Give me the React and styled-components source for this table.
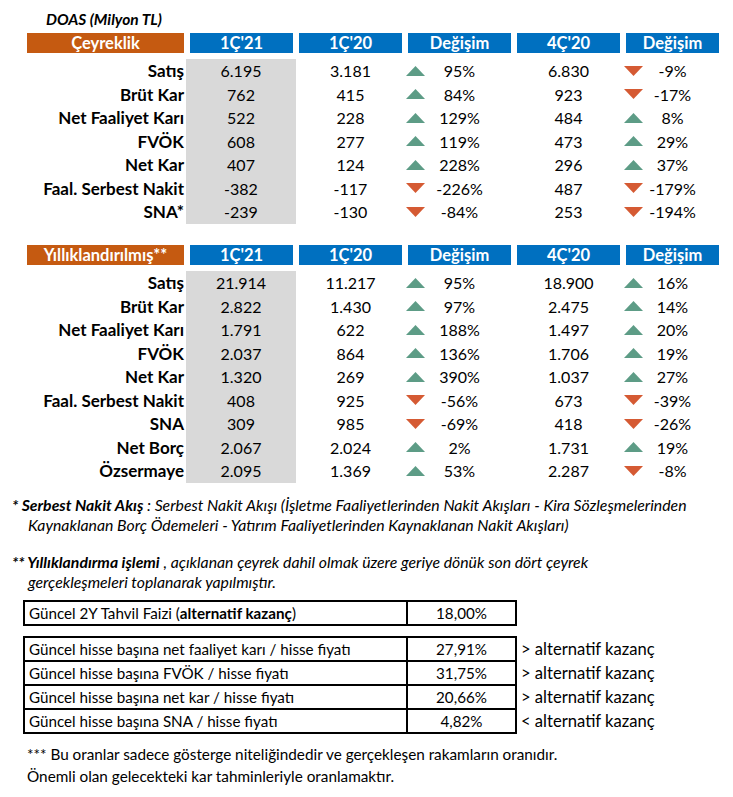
import React from 'react'
import styled, { createGlobalStyle } from 'styled-components'

const Global = createGlobalStyle`
    body {
        margin: 0;
        background: #fff;
        font-family: Lato, "Open Sans", sans-serif;
        color: #000;
    }
`

const Page = styled.div`
    width: 733px;
    padding-top: 9px;
`
const Title = styled.div`
    height: 24px;
    line-height: 20px;
    padding-left: 46px;
    font-size: 15.5px;
    font-weight: 700;
    font-style: italic;
`
const Grid = styled.div`
    display: grid;
    grid-template-columns: 157px 103px 103px 103px 103px 93px;
    column-gap: 6px;
    margin-left: 27px;
    margin-bottom: ${p => p.$gap || 0}px;
`
const Head = styled.div`
    height: 20px;
    line-height: 20px;
    margin-bottom: 6px;
    background: ${p => (p.$orange ? '#c55a11' : '#0070c0')};
    color: #fff;
    font-size: 16.5px;
    font-weight: 700;
    text-align: center;
    white-space: nowrap;
`
const Label = styled.div`
    height: 23.5px;
    line-height: 23.5px;
    text-align: right;
    font-size: 17px;
    font-weight: 700;
    white-space: nowrap;
`
const Value = styled.div`
    height: 23.5px;
    line-height: 23.5px;
    text-align: center;
    font-size: 16px;
    ${p => p.$grey && 'background: #d9d9d9; margin: 0 -3px 0 -4px;'}
`
const Change = styled.div`
    display: grid;
    grid-template-columns: 22px 1fr 22px;
    align-items: center;
    height: 23.5px;
    font-size: 16px;
    text-align: center;
    svg {
        margin-left: -2px;
    }
`
const Notes = styled.div`
    padding-left: 12px;
    font-size: 15.8px;
    font-style: italic;
    line-height: 20px;
    margin-bottom: ${p => p.$gap || 0}px;
    b {
        font-weight: 700;
    }
    div + div {
        padding-left: 16px;
    }
`
const RatioTable = styled.table`
    border-collapse: collapse;
    margin-left: 23px;
    margin-bottom: ${p => p.$gap || 0}px;
    font-size: 15.2px;
    td {
        height: 21px;
        padding: 1px 4px 0;
        line-height: 21px;
        white-space: nowrap;
    }
`
const NameCell = styled.td`
    width: 373px;
    border: 2px solid #000;
`
const RateCell = styled.td`
    width: 99px;
    border: 2px solid #000;
    text-align: center;
`
const SideCell = styled.td`
    font-size: 16.6px;
`
const Footer = styled.div`
    padding-left: 27px;
    font-size: 15.3px;
    line-height: 22px;
    margin-top: 9px;
`

const Tri = ({ up }) => (
    <svg width="19" height="10" viewBox="0 0 19 10">
        {up ? (
            <polygon points="9.5,0 19,10 0,10" fill="#5d9c86" />
        ) : (
            <polygon points="0,0 19,0 9.5,10" fill="#d55a33" />
        )}
    </svg>
)

const quarterly = [
    ['Satış', '6.195', '3.181', '95%', '6.830', '-9%'],
    ['Brüt Kar', '762', '415', '84%', '923', '-17%'],
    ['Net Faaliyet Karı', '522', '228', '129%', '484', '8%'],
    ['FVÖK', '608', '277', '119%', '473', '29%'],
    ['Net Kar', '407', '124', '228%', '296', '37%'],
    ['Faal. Serbest Nakit', '-382', '-117', '-226%', '487', '-179%'],
    ['SNA*', '-239', '-130', '-84%', '253', '-194%'],
]

const yearly = [
    ['Satış', '21.914', '11.217', '95%', '18.900', '16%'],
    ['Brüt Kar', '2.822', '1.430', '97%', '2.475', '14%'],
    ['Net Faaliyet Karı', '1.791', '622', '188%', '1.497', '20%'],
    ['FVÖK', '2.037', '864', '136%', '1.706', '19%'],
    ['Net Kar', '1.320', '269', '390%', '1.037', '27%'],
    ['Faal. Serbest Nakit', '408', '925', '-56%', '673', '-39%'],
    ['SNA', '309', '985', '-69%', '418', '-26%'],
    ['Net Borç', '2.067', '2.024', '2%', '1.731', '19%'],
    ['Özsermaye', '2.095', '1.369', '53%', '2.287', '-8%'],
]

const ratios = [
    ['Güncel hisse başına net faaliyet karı / hisse fiyatı', '27,91%', '> alternatif kazanç'],
    ['Güncel hisse başına FVÖK / hisse fiyatı', '31,75%', '> alternatif kazanç'],
    ['Güncel hisse başına net kar / hisse fiyatı', '20,66%', '> alternatif kazanç'],
    ['Güncel hisse başına SNA / hisse fiyatı', '4,82%', '< alternatif kazanç'],
]

const ChangeCell = ({ v }) => (
    <Change>
        <Tri up={!v.startsWith('-')} />
        <span>{v}</span>
        <span />
    </Change>
)

const DataTable = ({ title, rows, gap }) => (
    <Grid $gap={gap}>
        <Head $orange>{title}</Head>
        <Head>1Ç'21</Head>
        <Head>1Ç'20</Head>
        <Head>Değişim</Head>
        <Head>4Ç'20</Head>
        <Head>Değişim</Head>
        {rows.map(r => (
            <React.Fragment key={r[0]}>
                <Label>{r[0]}</Label>
                <Value $grey>{r[1]}</Value>
                <Value>{r[2]}</Value>
                <ChangeCell v={r[3]} />
                <Value>{r[4]}</Value>
                <ChangeCell v={r[5]} />
            </React.Fragment>
        ))}
    </Grid>
)

const App = () => {
    return (
        <Page>
            <Global />
            <Title>DOAS (Milyon TL)</Title>
            <DataTable title="Çeyreklik" rows={quarterly} gap={21.5} />
            <DataTable title="Yıllıklandırılmış**" rows={yearly} gap={12.5} />
            <Notes $gap={17}>
                <div>
                    <b>* Serbest Nakit Akış</b> : Serbest Nakit Akışı (İşletme Faaliyetlerinden Nakit Akışları - Kira Sözleşmelerinden
                </div>
                <div>Kaynaklanan Borç Ödemeleri - Yatırım Faaliyetlerinden Kaynaklanan Nakit Akışları)</div>
            </Notes>
            <Notes $gap={8}>
                <div>
                    <b>** Yıllıklandırma işlemi</b> , açıklanan çeyrek dahil olmak üzere geriye dönük son dört çeyrek
                </div>
                <div>gerçekleşmeleri toplanarak yapılmıştır.</div>
            </Notes>
            <RatioTable $gap={10}>
                <tbody>
                    <tr>
                        <NameCell>
                            Güncel 2Y Tahvil Faizi (<b>alternatif kazanç</b>)
                        </NameCell>
                        <RateCell>18,00%</RateCell>
                        <SideCell />
                    </tr>
                </tbody>
            </RatioTable>
            <RatioTable>
                <tbody>
                    {ratios.map(r => (
                        <tr key={r[0]}>
                            <NameCell>{r[0]}</NameCell>
                            <RateCell>{r[1]}</RateCell>
                            <SideCell>{r[2]}</SideCell>
                        </tr>
                    ))}
                </tbody>
            </RatioTable>
            <Footer>
                <div>*** Bu oranlar sadece gösterge niteliğindedir ve gerçekleşen rakamların oranıdır.</div>
                <div>Önemli olan gelecekteki kar tahminleriyle oranlamaktır.</div>
            </Footer>
        </Page>
    )
}

export default App
